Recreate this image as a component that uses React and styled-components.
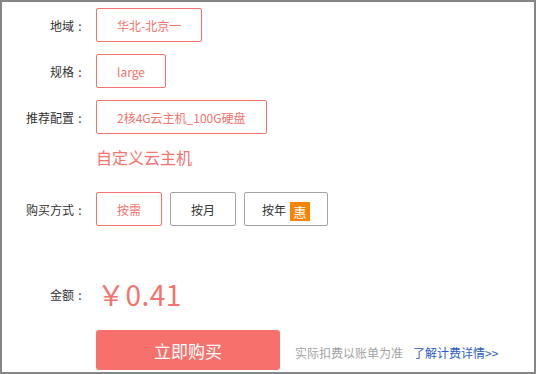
import styled, { createGlobalStyle, css } from "styled-components";

const Global = createGlobalStyle`
  html, body { margin: 0; padding: 0; background: #fff; }
  body { font-family: "Noto Sans CJK SC", "Noto Sans", sans-serif; }
`;

const Frame = styled.div`
  box-sizing: border-box;
  width: 536px;
  height: 374px;
  border: 2px solid #868686;
  padding-top: 6px;
  overflow: hidden;
  font-size: 12px;
  color: #333;
`;

const Row = styled.div`
  display: flex;
  align-items: center;
  margin-bottom: ${(p) => p.gap ?? 12}px;
`;

const Label = styled.div`
  display: flex;
  justify-content: flex-end;
  width: 84px;
  margin-right: 10px;
  white-space: nowrap;
  color: #333;
`;

const Colon = styled.span`
  width: 12px;
  text-align: center;
`;

const Options = styled.div`
  display: flex;
  gap: 8px;
`;

const Option = styled.div`
  box-sizing: border-box;
  height: 34px;
  ${(p) =>
    p.w
      ? css`
          width: ${p.w}px;
        `
      : css`
          padding: 0 20px;
        `}
  display: flex;
  align-items: center;
  justify-content: center;
  border: 1px solid #a3a3a3;
  border-radius: 2px;
  color: #333;
  white-space: nowrap;
  ${(p) =>
    p.active &&
    css`
      border-color: #f4736e;
      color: #f4736e;
    `}
`;

const Badge = styled.span`
  display: inline-flex;
  align-items: center;
  justify-content: center;
  width: 20px;
  height: 19px;
  margin-left: 4px;
  margin-top: 4px;
  background: #f78400;
  color: #fff;
  font-size: 13px;
`;

const Custom = styled.div`
  margin: 13px 0 0 94px;
  height: 20px;
  line-height: 20px;
  font-size: 16px;
  color: #f4736e;
`;

const Price = styled.div`
  font-size: 28px;
  color: #f4736e;
  line-height: 40px;
  padding-left: 1px;
  letter-spacing: 0.5px;
`;

const Footer = styled.div`
  display: flex;
  align-items: center;
  padding-left: 94px;
`;

const BuyButton = styled.button`
  width: 184px;
  height: 40px;
  border: none;
  border-radius: 3px;
  background: #f6716c;
  color: #fff;
  font-family: inherit;
  font-size: 17px;
  cursor: pointer;
`;

const Note = styled.span`
  margin-left: 15px;
  color: #a3a3a3;
  margin-top: 4px;
`;

const Link = styled.a`
  margin-left: 10px;
  margin-top: 4px;
  color: #2b5cc4;
  text-decoration: none;
`;

function FieldLabel({ children }) {
  return (
    <Label>
      {children}
      <Colon>:</Colon>
    </Label>
  );
}

export default function App() {
  return (
    <>
      <Global />
      <Frame>
        <Row>
          <FieldLabel>地域</FieldLabel>
          <Option active>华北-北京一</Option>
        </Row>
        <Row>
          <FieldLabel>规格</FieldLabel>
          <Option active>large</Option>
        </Row>
        <Row gap={0}>
          <FieldLabel>推荐配置</FieldLabel>
          <Option active>2核4G云主机_100G硬盘</Option>
        </Row>
        <Custom>自定义云主机</Custom>
        <Row gap={48} style={{ marginTop: 25 }}>
          <FieldLabel>购买方式</FieldLabel>
          <Options>
            <Option active w={66}>按需</Option>
            <Option w={66}>按月</Option>
            <Option w={84}>
              按年<Badge>惠</Badge>
            </Option>
          </Options>
        </Row>
        <Row gap={16}>
          <FieldLabel>金额</FieldLabel>
          <Price>￥0.41</Price>
        </Row>
        <Footer>
          <BuyButton>立即购买</BuyButton>
          <Note>实际扣费以账单为准</Note>
          <Link href="#">了解计费详情&gt;&gt;</Link>
        </Footer>
      </Frame>
    </>
  );
}
